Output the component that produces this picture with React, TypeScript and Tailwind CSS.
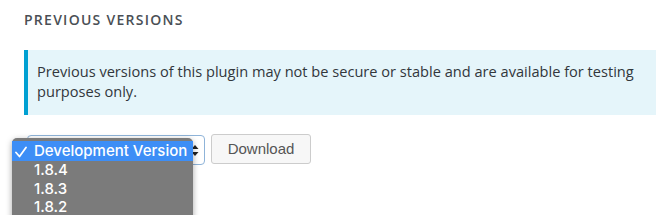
import React from 'react';

const versions = ['1.8.4', '1.8.3', '1.8.2'];

const App: React.FC = () => {
  return (
    <div className="relative w-[667px] h-[215px] overflow-hidden bg-white pl-[24px] pr-[11px] pt-[10px]">
      <h2 className="text-[14px] leading-[20px] font-semibold uppercase tracking-[0.09em] text-[#4a4f55] [font-family:'Open_Sans',sans-serif]">
        Previous Versions
      </h2>

      <div className="mt-[20px] h-[65px] border-l-4 border-[#00a0d2] bg-[#e5f5fa] pl-[9px] pr-[4px] pt-[11px] text-[14.6px] leading-[20px] text-[#32373c] [font-family:'Open_Sans',sans-serif]">
        Previous versions of this plugin may not be secure or stable and are available for testing purposes only.
      </div>

      <div className="mt-[19px] flex items-start gap-[6px]">
        <div className="ml-[3px] mt-[1px] flex h-[30px] w-[178px] items-center justify-end rounded-[4px] border border-[#8fb4d9] bg-white pr-[5px]">
          <svg width="8" height="13" viewBox="0 0 8 13" className="text-[#222]">
            <path d="M4 1 L7.5 5 H0.5 Z" fill="currentColor" />
            <path d="M4 12 L7.5 8 H0.5 Z" fill="currentColor" />
          </svg>
        </div>
        <button className="h-[30px] w-[100px] rounded-[3px] border border-[#cccccc] bg-[#f7f7f7] text-[15px] text-[#555] [font-family:'Liberation_Sans',Arial,sans-serif]">
          Download
        </button>
      </div>

      <div className="absolute left-[12px] top-[138px] w-[181px] h-[90px] rounded-[5px] bg-[#7b7b7b] pt-[3px] shadow-[0_2px_6px_rgba(0,0,0,0.35)] text-white text-[15px] font-medium [font-family:Inter,'Liberation_Sans',sans-serif]">
        <div className="flex h-[20px] items-center bg-[#3d8ef6] pl-[3px] pt-[1px]">
          <span className="flex w-[19px] items-center">
            <svg width="12" height="12" viewBox="0 0 12 12">
              <polyline points="1,6.5 4.5,10.5 11,1.5" fill="none" stroke="white" strokeWidth="1.8" strokeLinecap="round" strokeLinejoin="round" />
            </svg>
          </span>
          <span>Development Version</span>
        </div>
        {versions.map((v) => (
          <div key={v} className="flex h-[18.5px] items-center pl-[22px]">
            {v}
          </div>
        ))}
      </div>
    </div>
  );
};

export default App;
